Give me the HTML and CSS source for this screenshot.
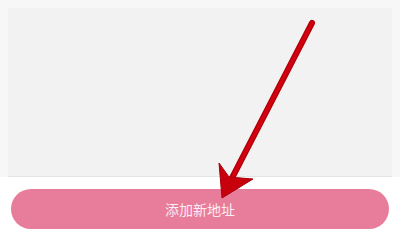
FILE: index.html
```html
<!DOCTYPE html>
<html>
<head>
    <title>地址管理</title>
    <link rel="stylesheet" href="styles.css">
</head>
<body>

    <div class="page">
        <div class="listArea"></div>
        <div class="footer">
            <button class="addBtn">添加新地址</button>
        </div>

        <svg class="arrow" width="400" height="233" viewBox="0 0 400 233">
            <line x1="312" y1="23" x2="232" y2="178" stroke="#b3000a" stroke-width="6" stroke-linecap="round"/>
            <line x1="312" y1="23" x2="232" y2="178" stroke="#d4000f" stroke-width="3" stroke-linecap="round"/>
            <polygon points="222,198 219,163 229,177 253,179" fill="#c8000c" stroke="#a8000a" stroke-width="1" stroke-linejoin="round"/>
        </svg>
    </div>

</body>
</html>
```

FILE: styles.css
```css
body {
    margin: 0;
    padding: 0;
    background-color: #f7f7f7;
    font-family: "Noto Sans CJK SC", "Noto Sans", sans-serif;
}

.page {
    position: relative;
    width: 400px;
    height: 233px;
    overflow: hidden;
}

.listArea {
    margin: 8px 8px 0;
    height: 168px;
    background-color: #f2f2f2;
    border-bottom: 1px solid #e4e4e4;
}

.footer {
    background-color: #fff;
    height: 56px;
    padding: 12px 11px 0;
    box-sizing: border-box;
}

.addBtn {
    display: block;
    width: 100%;
    height: 40px;
    border: none;
    border-radius: 20px;
    background-color: #e87d9b;
    color: rgba(255, 255, 255, 0.88);
    font-family: inherit;
    font-size: 14px;
    cursor: pointer;
}

/* annotation drawn over the screenshot */
.arrow {
    position: absolute;
    top: 0;
    left: 0;
    pointer-events: none;
}
```
